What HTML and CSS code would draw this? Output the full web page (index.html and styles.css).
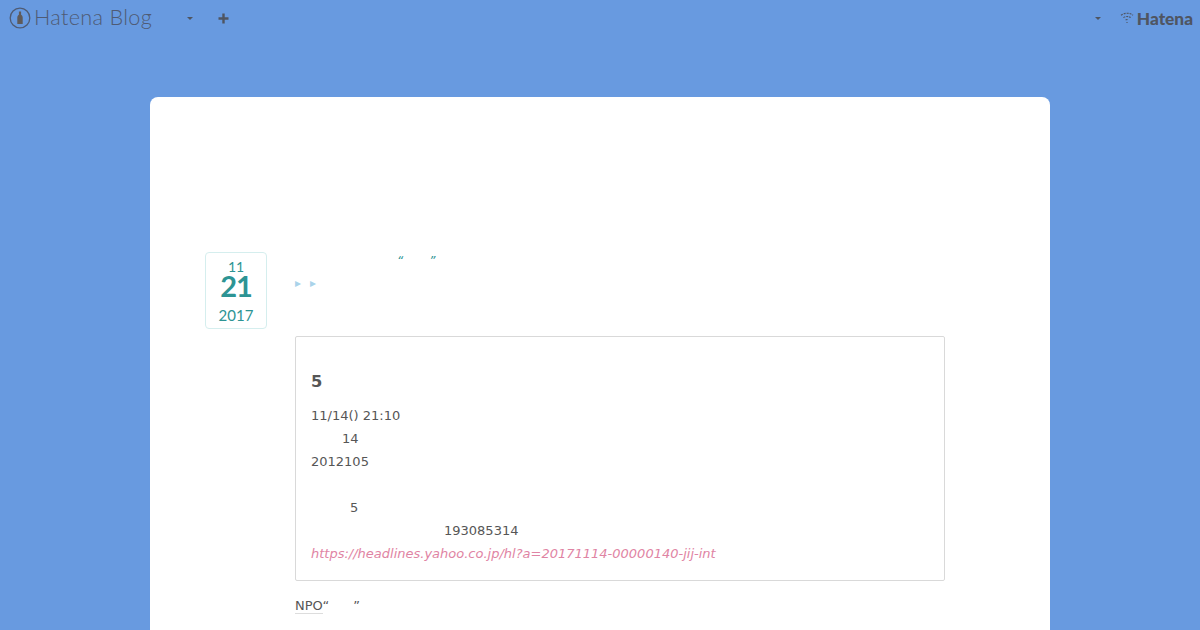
FILE: index.html
```html
<!DOCTYPE html>
<html lang="ja">
  <head>
    <meta charset="UTF-8">
    <title>Hatena Blog</title>
    <link rel="stylesheet" href="styles.css">
  </head>
  <body>
    <header class="navbar">
      <div class="navbar-left">
        <a class="brand" href="#">
          <svg class="brand-icon" width="22" height="22" viewBox="0 0 22 22">
            <circle cx="11" cy="11" r="9.8" fill="none" stroke="#4f5b73" stroke-width="1.3"/>
            <path d="M9.9 4.5h2.2v3.2c1.1.8 1.6 1.6 1.6 2.8v6.6H8.3v-6.6c0-1.2.5-2 1.6-2.8z" fill="#5f5a58"/>
          </svg>
          <span class="brand-name">Hatena Blog</span>
        </a>
        <span class="caret caret-left"></span>
        <svg class="plus" width="11" height="11" viewBox="0 0 11 11">
          <path d="M4.3 0.5h2.4v3.8h3.8v2.4H6.7v3.8H4.3V6.7H0.5V4.3h3.8z" fill="#4f5560"/>
        </svg>
      </div>
      <div class="navbar-right">
        <span class="caret"></span>
        <a class="hatena" href="#">
          <svg width="14" height="12" viewBox="0 0 14 12">
            <path d="M1 3.2C4.5.6 9.5.6 13 3.2M3.4 5.6c2.2-1.5 5-1.5 7.2 0M5.6 8c.9-.6 1.9-.6 2.8 0M7 10v1" fill="none" stroke="#4f5560" stroke-width="1.1" stroke-dasharray="2 1"/>
          </svg>
          <span>Hatena</span>
        </a>
      </div>
    </header>

    <main class="container">
      <article class="entry">
        <div class="date">
          <span class="date-month">11</span>
          <span class="date-day">21</span>
          <span class="date-year">2017</span>
        </div>
        <div class="entry-body">
          <h1 class="entry-title"><span class="quote-open">“</span><span class="quote-close">”</span></h1>
          <div class="breadcrumb"><span class="arrow">▸</span><span class="arrow">▸</span></div>
          <blockquote class="quote">
            <h2 class="quote-title">5</h2>
            <p>
              11/14() 21:10<br>
              <span class="indent-a"></span>14<br>
              2012105<br>
              <br>
              <span class="indent-b"></span>5<br>
              <span class="indent-c"></span>193085314<br>
              <a class="quote-link" href="#">https://headlines.yahoo.co.jp/hl?a=20171114-00000140-jij-int</a>
            </p>
          </blockquote>
          <p class="after"><span class="after-key">NPO</span>“<span class="indent-d"></span>”</p>
        </div>
      </article>
    </main>
  </body>
</html>
```

FILE: styles.css
```css
html, body {
  height: 630px;
  overflow: hidden;
}

body {
  margin: 0;
  background-color: #689ae0;
  color: #555;
  font-family: "DejaVu Sans", sans-serif;
  font-size: 13px;
}

a {
  text-decoration: none;
}

.navbar {
  display: flex;
  justify-content: space-between;
  align-items: center;
  height: 36px;
  padding: 0 7px 0 9px;
  opacity: 0.99;
}

.navbar-left,
.navbar-right {
  display: flex;
  align-items: center;
}

.brand {
  display: flex;
  align-items: center;
  gap: 3px;
  color: #4f5b73;
}

.brand-name {
  margin-top: -2px;
  font-family: Lato, sans-serif;
  font-size: 21.7px;
  font-weight: 300;
  letter-spacing: 0.3px;
  line-height: 26px;
}

.caret {
  width: 0;
  height: 0;
  border-left: 3px solid transparent;
  border-right: 3px solid transparent;
  border-top: 3px solid #4f5560;
}

.caret-left {
  margin-left: 35px;
}

.plus {
  margin-left: 25px;
}

.hatena {
  display: flex;
  align-items: center;
  gap: 3px;
  margin-left: 19px;
  color: #4f5560;
  font-family: Lato, sans-serif;
  font-size: 17.3px;
  font-weight: 900;
}

.container {
  width: 900px;
  height: 540px;
  margin: 61px auto 0;
  padding-top: 155px;
  box-sizing: border-box;
  background-color: #fff;
  border-radius: 8px 8px 0 0;
}

.entry {
  display: flex;
  padding-left: 55px;
  opacity: 0.99;
}

.date {
  display: flex;
  flex-direction: column;
  align-items: center;
  box-sizing: border-box;
  width: 62px;
  height: 77px;
  padding-top: 6px;
  border: 1px solid #d5eeee;
  border-radius: 4px;
  color: #2b9393;
  font-family: Lato, sans-serif;
}

.date-month {
  font-size: 14px;
  line-height: 16px;
}

.date-day {
  font-size: 29px;
  font-weight: 700;
  letter-spacing: -1px;
  line-height: 22px;
}

.date-year {
  margin-top: 10px;
  font-size: 15px;
  line-height: 16px;
}

.entry-body {
  width: 650px;
  margin-left: 28px;
}

.entry-title {
  display: flex;
  height: 12px;
  margin: 0;
  padding-top: 3px;
  color: #2b9393;
  font-size: 12px;
  font-style: italic;
  font-weight: normal;
  line-height: 12px;
}

.quote-open {
  margin-left: 102px;
}

.quote-close {
  margin-left: 26px;
}

.breadcrumb {
  display: flex;
  gap: 9px;
  height: 16px;
  margin-top: 8px;
  color: #a9d3ea;
  font-size: 12px;
  line-height: 16px;
}

.quote {
  box-sizing: border-box;
  height: 245px;
  margin: 45px 0 0;
  padding: 33px 15px 0;
  border: 1px solid #d9d9d9;
  border-radius: 2px;
}

.quote-title {
  margin: 0 0 10px;
  font-size: 16.3px;
  line-height: 24px;
}

.quote p {
  margin: 0;
  line-height: 23px;
}

.quote-link {
  color: #df83a3;
  font-style: italic;
}

.indent-a,
.indent-b,
.indent-c,
.indent-d {
  display: inline-block;
}

.indent-a {
  width: 31px;
}

.indent-b {
  width: 39px;
}

.indent-c {
  width: 133px;
}

.indent-d {
  width: 24px;
}

.after {
  margin: 15px 0 0;
  line-height: 20px;
}

.after-key {
  border-bottom: 1px solid #ddd;
}
```
